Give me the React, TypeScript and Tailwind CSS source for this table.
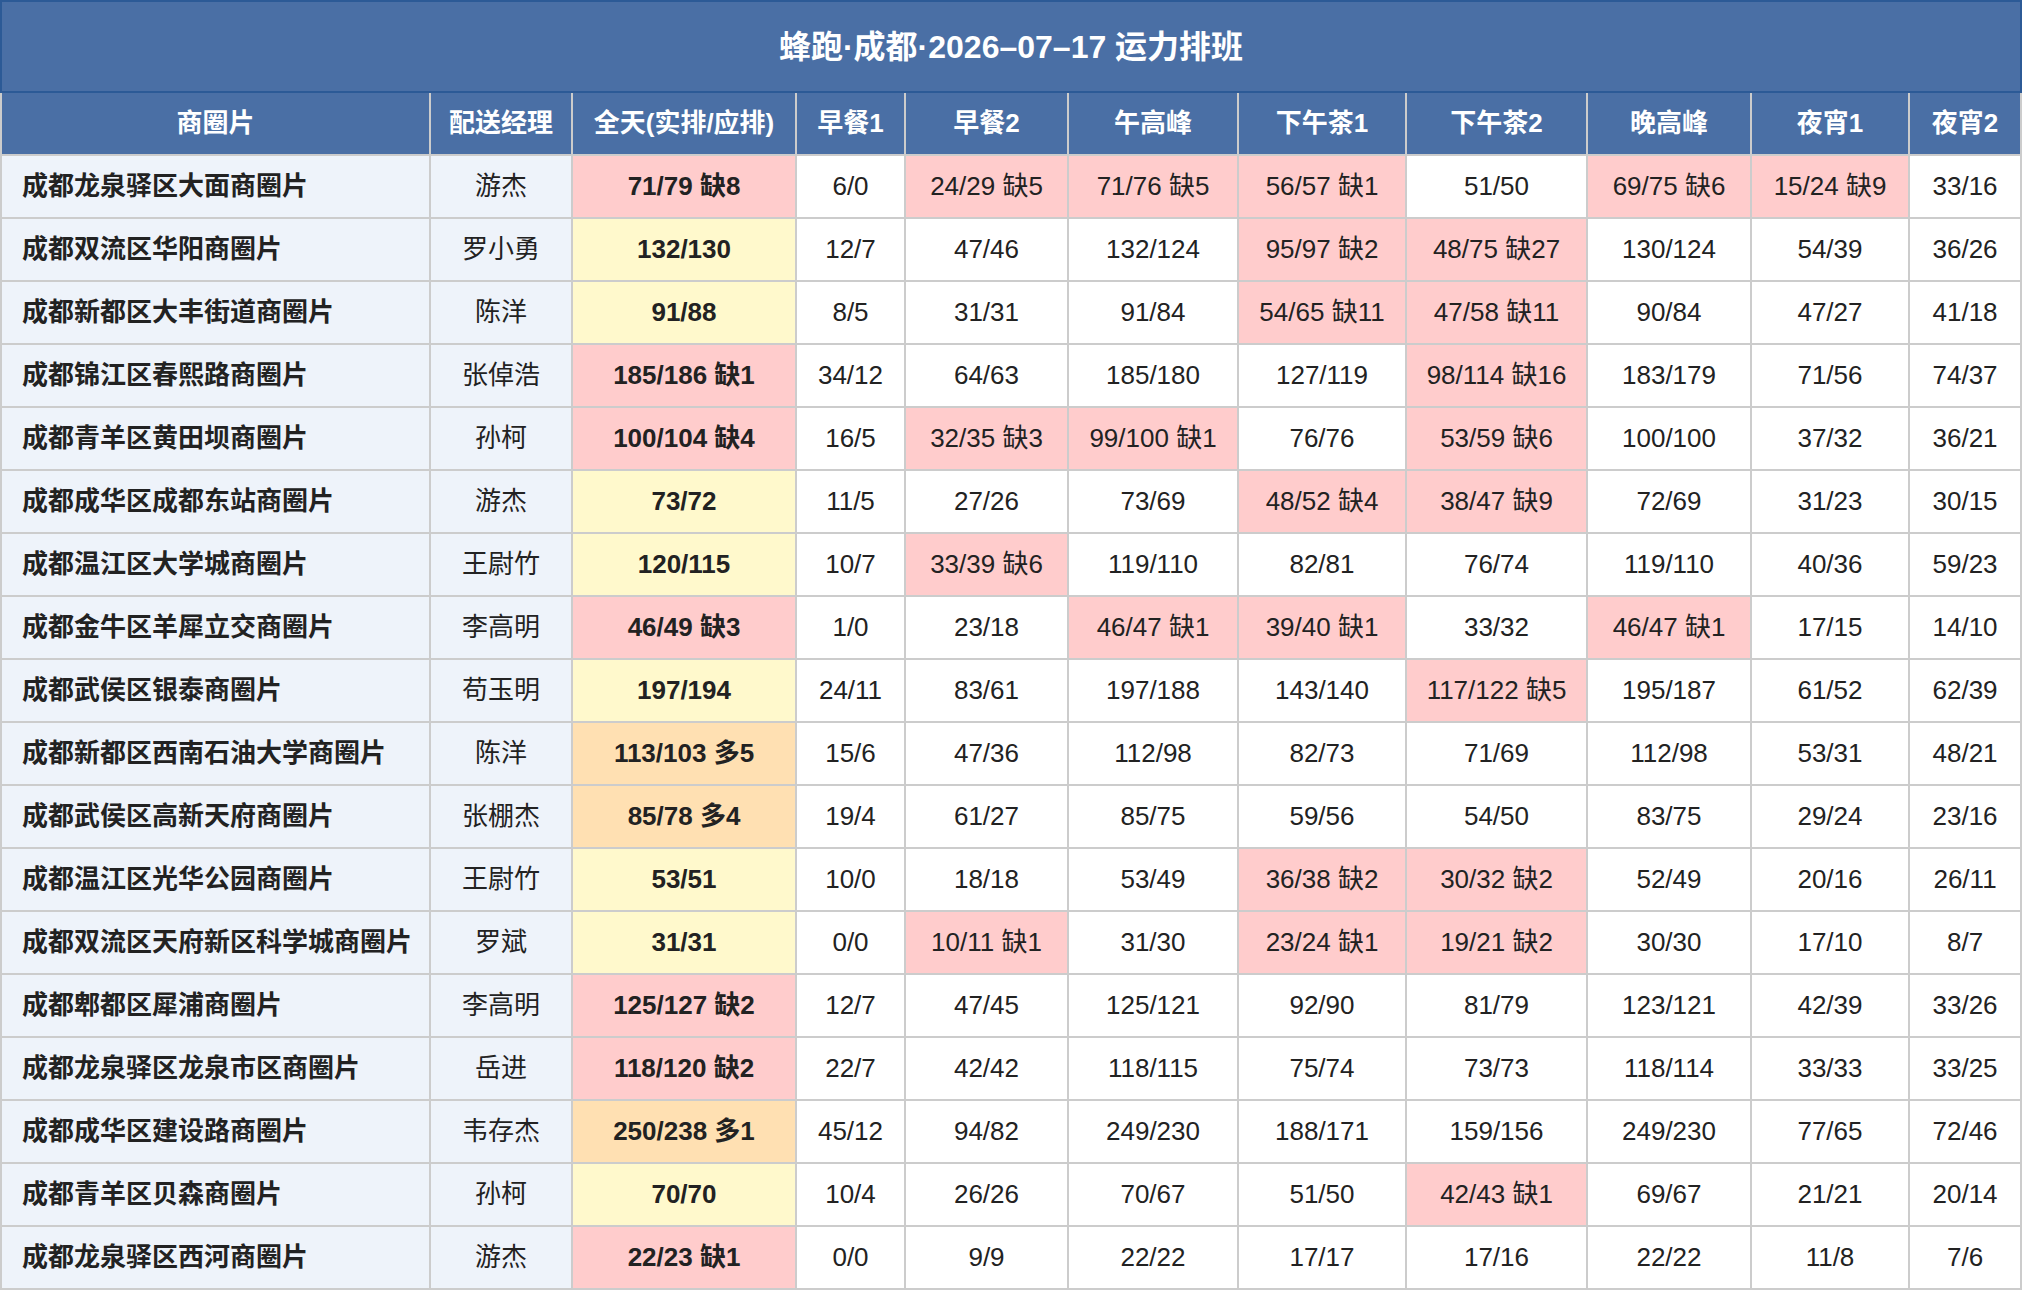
import React from "react";

const headers = ["商圈片", "配送经理", "全天(实排/应排)", "早餐1", "早餐2", "午高峰", "下午茶1", "下午茶2", "晚高峰", "夜宵1", "夜宵2"];

const rows: string[][] = [
  ["成都龙泉驿区大面商圈片", "游杰", "71/79 缺8", "6/0", "24/29 缺5", "71/76 缺5", "56/57 缺1", "51/50", "69/75 缺6", "15/24 缺9", "33/16"],
  ["成都双流区华阳商圈片", "罗小勇", "132/130", "12/7", "47/46", "132/124", "95/97 缺2", "48/75 缺27", "130/124", "54/39", "36/26"],
  ["成都新都区大丰街道商圈片", "陈洋", "91/88", "8/5", "31/31", "91/84", "54/65 缺11", "47/58 缺11", "90/84", "47/27", "41/18"],
  ["成都锦江区春熙路商圈片", "张倬浩", "185/186 缺1", "34/12", "64/63", "185/180", "127/119", "98/114 缺16", "183/179", "71/56", "74/37"],
  ["成都青羊区黄田坝商圈片", "孙柯", "100/104 缺4", "16/5", "32/35 缺3", "99/100 缺1", "76/76", "53/59 缺6", "100/100", "37/32", "36/21"],
  ["成都成华区成都东站商圈片", "游杰", "73/72", "11/5", "27/26", "73/69", "48/52 缺4", "38/47 缺9", "72/69", "31/23", "30/15"],
  ["成都温江区大学城商圈片", "王尉竹", "120/115", "10/7", "33/39 缺6", "119/110", "82/81", "76/74", "119/110", "40/36", "59/23"],
  ["成都金牛区羊犀立交商圈片", "李高明", "46/49 缺3", "1/0", "23/18", "46/47 缺1", "39/40 缺1", "33/32", "46/47 缺1", "17/15", "14/10"],
  ["成都武侯区银泰商圈片", "苟玉明", "197/194", "24/11", "83/61", "197/188", "143/140", "117/122 缺5", "195/187", "61/52", "62/39"],
  ["成都新都区西南石油大学商圈片", "陈洋", "113/103 多5", "15/6", "47/36", "112/98", "82/73", "71/69", "112/98", "53/31", "48/21"],
  ["成都武侯区高新天府商圈片", "张棚杰", "85/78 多4", "19/4", "61/27", "85/75", "59/56", "54/50", "83/75", "29/24", "23/16"],
  ["成都温江区光华公园商圈片", "王尉竹", "53/51", "10/0", "18/18", "53/49", "36/38 缺2", "30/32 缺2", "52/49", "20/16", "26/11"],
  ["成都双流区天府新区科学城商圈片", "罗斌", "31/31", "0/0", "10/11 缺1", "31/30", "23/24 缺1", "19/21 缺2", "30/30", "17/10", "8/7"],
  ["成都郫都区犀浦商圈片", "李高明", "125/127 缺2", "12/7", "47/45", "125/121", "92/90", "81/79", "123/121", "42/39", "33/26"],
  ["成都龙泉驿区龙泉市区商圈片", "岳进", "118/120 缺2", "22/7", "42/42", "118/115", "75/74", "73/73", "118/114", "33/33", "33/25"],
  ["成都成华区建设路商圈片", "韦存杰", "250/238 多1", "45/12", "94/82", "249/230", "188/171", "159/156", "249/230", "77/65", "72/46"],
  ["成都青羊区贝森商圈片", "孙柯", "70/70", "10/4", "26/26", "70/67", "51/50", "42/43 缺1", "69/67", "21/21", "20/14"],
  ["成都龙泉驿区西河商圈片", "游杰", "22/23 缺1", "0/0", "9/9", "22/22", "17/17", "17/16", "22/22", "11/8", "7/6"],
];

const colWidths = ["w-[429px]", "w-[142px]", "w-[224px]", "w-[109px]", "w-[163px]", "w-[170px]", "w-[168px]", "w-[181px]", "w-[164px]", "w-[158px]", "w-[112px]"];

function cellBg(i: number, v: string): string {
  if (i < 2) return "bg-[#eef3fa]";
  if (v.includes("缺")) return "bg-[#ffcccc]";
  if (i === 2) return v.includes("多") ? "bg-[#ffe0b2]" : "bg-[#fff9cc]";
  return "bg-white";
}

export default function App() {
  return (
    <div className="w-[2020px] bg-white font-['Liberation_Sans','Noto_Sans_CJK_SC',sans-serif] text-[#222]">
      <table className="w-full table-fixed border-collapse">
        <colgroup>
          {colWidths.map((w, i) => (
            <col key={i} className={w} />
          ))}
        </colgroup>
        <thead>
          <tr>
            <th
              colSpan={11}
              className="h-[91px] border-2 border-[#2c5a96] bg-[#4a6fa5] p-0 text-center align-middle text-[32px] font-bold text-white"
            >
              蜂跑·成都·2026–07–17 运力排班
            </th>
          </tr>
          <tr>
            {headers.map((h, i) => (
              <th
                key={i}
                className="h-[63px] border-2 border-[#cccccc] bg-[#4a6fa5] p-0 text-center align-middle text-[26px] font-bold whitespace-nowrap text-white"
              >
                {h}
              </th>
            ))}
          </tr>
        </thead>
        <tbody>
          {rows.map((r, ri) => (
            <tr key={ri}>
              {r.map((v, i) => (
                <td
                  key={i}
                  className={`h-[63px] border-2 border-[#cccccc] py-0 align-middle text-[26px] whitespace-nowrap ${cellBg(i, v)} ${
                    i === 0 ? "pl-[20px] pr-0 text-left font-bold" : "px-0 text-center"
                  } ${i === 2 ? "font-bold" : ""}`}
                >
                  {v}
                </td>
              ))}
            </tr>
          ))}
        </tbody>
      </table>
    </div>
  );
}
